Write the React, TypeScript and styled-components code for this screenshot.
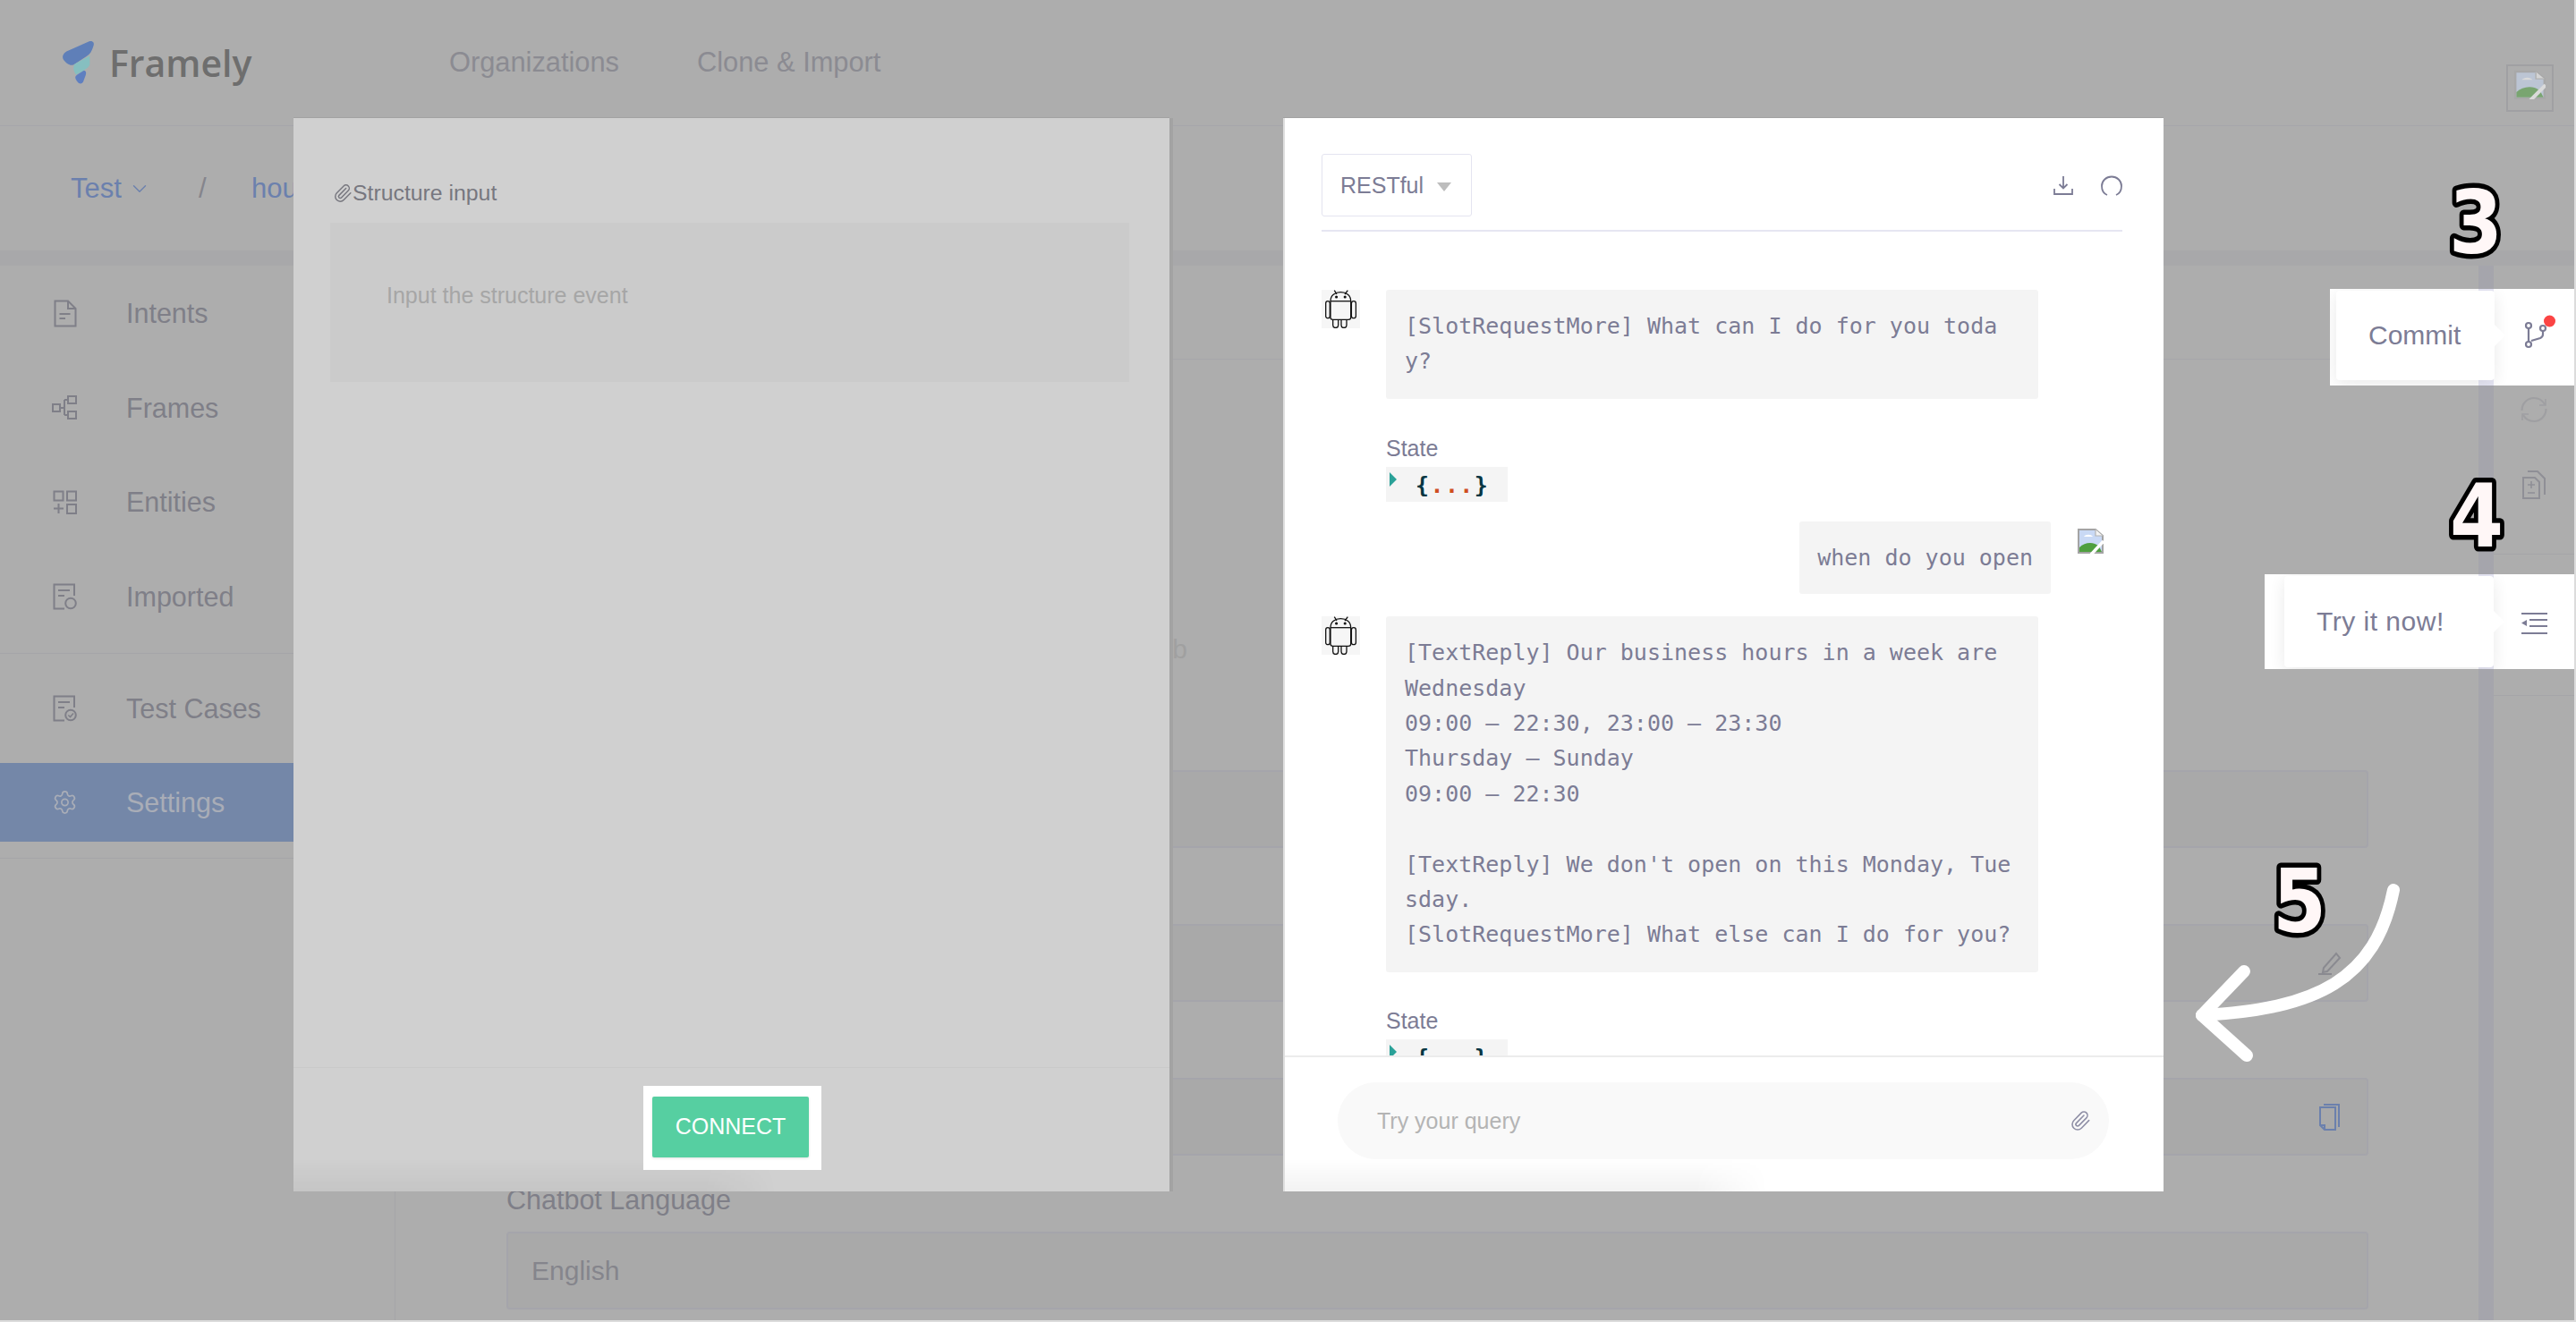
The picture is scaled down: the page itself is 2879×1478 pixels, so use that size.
import React from "react"
import styled, { createGlobalStyle } from "styled-components"
import { ChevronDown, Paperclip, Settings } from "lucide-react"

const GlobalStyle = createGlobalStyle`
  html, body {
    margin: 0;
    padding: 0;
    background: #dcdcdc;
  }
  * {
    box-sizing: border-box;
  }
`

const Stage = styled.div`
  position: relative;
  width: 2879px;
  height: 1478px;
  overflow: hidden;
  padding: 0 2px 2px 0;
  font-family: "Liberation Sans", Arial, sans-serif;
  color: #7f7f88;
`

const Page = styled.div`
  display: flex;
  flex-direction: column;
  height: 100%;
  background: #adadad;
`

const Header = styled.header`
  flex: none;
  display: flex;
  align-items: center;
  height: 141px;
  padding: 0 23px 0 67px;
  border-bottom: 1px solid #a6a6ab;
`

const Logo = styled.div`
  display: flex;
  align-items: center;
  gap: 15px;
  width: 435px;
  height: 60px;
  font-family: "Open Sans", sans-serif;
  font-size: 41px;
  font-weight: 600;
  color: #6e6e6e;
`

const TopNav = styled.nav`
  display: flex;
  gap: 87px;
  font-size: 30.8px;
  color: #8b8b92;
`

const UserPic = styled.div`
  align-self: flex-end;
  display: flex;
  justify-content: center;
  padding-top: 5px;
  width: 53px;
  height: 53px;
  margin: 0 0 15px auto;
  border: 2px solid #a0a0a3;
`

const Crumbs = styled.div`
  flex: none;
  display: flex;
  align-items: center;
  height: 139px;
  padding-left: 79px;
  font-size: 31px;
  color: #6b80ad;
`

const CrumbLink = styled.span`
  display: flex;
  align-items: center;
  gap: 7px;
  width: 143px;
`

const CrumbSlash = styled.span`
  width: 59px;
  color: #85858c;
`

const Band = styled.div`
  flex: none;
  height: 17px;
  background: #a8a8aa;
`

const Body = styled.div`
  flex: 1;
  display: flex;
  min-height: 0;
`

const Sidebar = styled.aside`
  flex: none;
  width: 442px;
  border-right: 1px solid #a5a5a8;
`

const NavGroup = styled.div<{ $top: number; $bottom: number }>`
  display: flex;
  flex-direction: column;
  gap: 17.6px;
  padding: ${(p) => p.$top}px 0 ${(p) => p.$bottom}px;
  border-bottom: 1px solid #a5a5a8;
`

const NavItem = styled.div<{ $active?: boolean }>`
  display: flex;
  align-items: center;
  gap: 54px;
  height: 88px;
  padding: 1px 0 0 58px;
  font-size: 30.5px;
  background: ${(p) => (p.$active ? "#7487a8" : "transparent")};
  color: ${(p) => (p.$active ? "#a9adb7" : "#7f7f88")};
`

const NavIcon = styled.span`
  flex: none;
  display: flex;
  justify-content: center;
  width: 29px;
  margin-top: -1px;
`

const Main = styled.main`
  flex: 1;
  min-width: 0;
`

const MainHead = styled.div`
  height: 105px;
  border-bottom: 1px solid #a6a6aa;
`

const Content = styled.div`
  padding: 304px 123px 0 124px;
`

const Hint = styled.p`
  width: 761px;
  margin: 0 0 29px;
  font-size: 30px;
  line-height: 40px;
  text-align: right;
  color: #a0a0a0;
`

const FieldLabel = styled.div`
  display: flex;
  align-items: center;
  height: 86px;
  font-size: 30.5px;
  color: #7f7f88;
`

const LanguageLabel = styled(FieldLabel)`
  align-items: flex-start;
  padding-top: 33px;
`

const FieldBox = styled.div`
  display: flex;
  align-items: center;
  justify-content: space-between;
  height: 87px;
  margin-bottom: -1px;
  padding: 0 28px 0 26px;
  background: #a9a9a9;
  border: 2px solid #a5a5ab;
  border-radius: 4px;
  font-size: 30px;
  color: #85858c;
`

const Gutter = styled.div`
  flex: none;
  width: 17px;
  background: #a5a5ac;
`

const Rail = styled.div`
  flex: none;
  width: 90px;
  padding-top: 35px;
`

const RailSlot = styled.div`
  display: flex;
  align-items: center;
  justify-content: center;
  height: 84px;
`

const RailRule = styled.div<{ $top: number }>`
  margin-top: ${(p) => p.$top}px;
  border-top: 1px solid #a5a5a8;
`

/* dialogs and highlights, they sit on top of the page */
const Dialog = styled.section<{ $left: number; $width: number; $bg: string }>`
  position: absolute;
  top: 132px;
  left: ${(p) => p.$left}px;
  width: ${(p) => p.$width}px;
  height: 1200px;
  display: flex;
  flex-direction: column;
  background: ${(p) => p.$bg};
  box-shadow: 0 -1px 0 #a2a2a2;

  &::after {
    content: "";
    position: absolute;
    left: 0;
    bottom: 0;
    width: 540px;
    height: 36px;
    background: linear-gradient(180deg, rgba(0, 0, 0, 0), rgba(0, 0, 0, 0.05));
    mask-image: linear-gradient(90deg, #000 85%, transparent);
    pointer-events: none;
  }
`

const LeftDialog = styled(Dialog)`
  box-shadow: 0 -1px 0 #a2a2a2, 4px 0 0 #a3a3a3;
`

const RightDialog = styled(Dialog)`
  border-left: 2px solid #dedede;
`

const StructureBody = styled.div`
  flex: 1;
  padding: 64px 45px 0 41px;
`

const StructureLabel = styled.div`
  display: flex;
  align-items: center;
  gap: 0;
  height: 40px;
  margin: 0 0 13px 3px;
  font-size: 24.8px;
  color: #77777f;
`

const StructureInput = styled.div`
  height: 178px;
  padding: 61px 63px;
  background: #cbcbcb;
  font-size: 25px;
  line-height: 40px;
  color: #a6a6a6;
`

const ConnectFooter = styled.div`
  flex: none;
  display: flex;
  align-items: center;
  justify-content: center;
  height: 139px;
  padding: 0 0 5px 2px;
  border-top: 1px solid #c9c9c9;
`

const Spotlight = styled.div`
  position: relative;
  z-index: 1;
  padding: 12px 14px 14px 10px;
  background: #fff;
`

const ConnectButton = styled.button`
  display: block;
  width: 175px;
  height: 68px;
  padding: 0;
  border: 0;
  border-radius: 2px;
  background: #56cfa1;
  box-shadow: 0 1px 3px rgba(0, 0, 0, 0.12);
  font-family: inherit;
  font-size: 25px;
  color: #fff;
`

const ChatHead = styled.div`
  flex: none;
  display: flex;
  align-items: center;
  justify-content: space-between;
  margin: 40px 46px 0 41px;
  padding-bottom: 15px;
  border-bottom: 2px solid #e6e6f2;
`

const ModeSelect = styled.div`
  display: flex;
  align-items: center;
  gap: 15px;
  width: 168px;
  height: 70px;
  padding-left: 20px;
  border: 1px solid #e4e4f0;
  border-radius: 3px;
  font-size: 25px;
  color: #7c7c95;
`

const Caret = styled.span`
  width: 0;
  height: 0;
  margin-top: 3px;
  border-left: 8px solid transparent;
  border-right: 8px solid transparent;
  border-top: 10px solid #bdbdbd;
`

const HeadTools = styled.div`
  display: flex;
  align-items: center;
  gap: 31px;
`

const ChatScroll = styled.div`
  flex: 1;
  min-height: 0;
  overflow: hidden;
  padding: 65px 46px 0 41px;
`

const BotRow = styled.div`
  display: flex;
  align-items: flex-start;
  gap: 29px;
`

const Avatar = styled.div`
  flex: none;
  width: 43px;
  height: 43px;
  background: #f6f6f6;
`

const Bubble = styled.div<{ $width?: number }>`
  width: ${(p) => (p.$width ? `${p.$width}px` : "auto")};
  padding: 21px 21px 22px;
  background: #f4f4f4;
  border-radius: 3px;
  font-family: "DejaVu Sans Mono", monospace;
  font-size: 25px;
  line-height: 39.4px;
  color: #7c7c95;
  white-space: pre-wrap;
  word-break: break-all;
`

const StateBlock = styled.div<{ $top: number }>`
  margin: ${(p) => p.$top}px 0 0 72px;
`

const StateTitle = styled.div`
  height: 40px;
  margin-top: -1px;
  font-size: 25px;
  line-height: 38px;
  color: #7c7c95;
`

const StateCode = styled.div`
  position: relative;
  width: 136px;
  height: 39px;
  padding-left: 33px;
  background: #f4f4f4;
  font-family: "DejaVu Sans Mono", monospace;
  font-size: 25px;
  font-weight: 700;
  letter-spacing: 1.4px;
  line-height: 42px;
  color: #073642;
`

const StateToggle = styled.span`
  position: absolute;
  left: 4px;
  top: 6px;
  width: 0;
  height: 0;
  border-top: 8px solid transparent;
  border-bottom: 8px solid transparent;
  border-left: 8px solid #2aa198;
`

const StateDots = styled.span`
  color: #cf4f1f;
`

const UserRow = styled.div`
  display: flex;
  justify-content: flex-end;
  align-items: flex-start;
  gap: 30px;
  margin: 22px 21px 25px 0;
`

const UserBubble = styled(Bubble)`
  padding: 21px 20px;
  white-space: nowrap;
`

const BrokenSlot = styled.div`
  padding-top: 8px;
`

const QueryFooter = styled.div`
  flex: none;
  height: 152px;
  padding: 28px 61px 0 59px;
  border-top: 2px solid #ececec;
`

const QueryBox = styled.div`
  display: flex;
  align-items: center;
  justify-content: space-between;
  height: 86px;
  padding: 0 20px 0 44px;
  border-radius: 43px;
  background: #f9f9f9;
  font-size: 25px;
  color: #b4b4b4;
`

const Callout = styled.div<{ $left: number; $top: number; $height: number; $pad: number; $band: number }>`
  position: absolute;
  left: ${(p) => p.$left}px;
  right: 2px;
  top: ${(p) => p.$top}px;
  height: ${(p) => p.$height}px;
  display: flex;
  align-items: flex-start;
  padding: 2px 0 0 ${(p) => p.$pad}px;
  background: linear-gradient(
    90deg,
    #fff ${(p) => p.$band}px,
    #e6e6f4 ${(p) => p.$band}px,
    #e6e6f4 ${(p) => p.$band + 17}px,
    #fff ${(p) => p.$band + 17}px
  );
  overflow: hidden;
`

const Tooltip = styled.div<{ $width: number; $height: number }>`
  position: relative;
  flex: none;
  display: flex;
  align-items: center;
  width: ${(p) => p.$width}px;
  height: ${(p) => p.$height}px;
  padding-left: 36px;
  background: #fff;
  border-radius: 4px;
  box-shadow: 0 4px 18px rgba(0, 0, 0, 0.09);
  font-size: 30px;
  color: #7c7c95;

  &::after {
    content: "";
    position: absolute;
    right: -12px;
    top: 50%;
    margin-top: -12px;
    border-top: 12px solid transparent;
    border-bottom: 12px solid transparent;
    border-left: 12px solid #fff;
  }
`

const TryLabel = styled.span`
  letter-spacing: 0.5px;
`

const CalloutIcon = styled.div<{ $gap: number; $top: number }>`
  margin: ${(p) => p.$top}px 0 0 ${(p) => p.$gap}px;
`

const Numeral = styled.svg<{ $left: number; $top: number }>`
  position: absolute;
  left: ${(p) => p.$left}px;
  top: ${(p) => p.$top}px;
  width: 100px;
  height: 110px;
  font-family: "DejaVu Sans", sans-serif;
  font-weight: 700;
`

const ArrowMark = styled.svg`
  position: absolute;
  left: 2440px;
  top: 980px;
  width: 250px;
  height: 215px;
`

const FramelyMark = () => (
  <svg width="40" height="52" viewBox="50 40 120 155">
    <path
      d="M148 46C160 43 167 50 162 63C157 80 150 90 140 96L100 122C88 132 72 122 62 108C56 98 60 88 72 80Z"
      fill="#5f7fb8"
    />
    <path d="M100 122L150 94L150 122C150 130 140 138 120 150L104 158C96 148 92 132 100 122Z" fill="#86bfc0" />
    <path d="M108 158L128 145C136 142 140 150 136 160L128 182C122 192 112 188 106 178C100 168 100 164 108 158Z" fill="#5f7fc0" />
  </svg>
)

const BrokenImage = ({ w, h, dim }: { w: number; h: number; dim?: boolean }) => (
  <svg width={w} height={h} viewBox="0 0 29 28" opacity={dim ? 0.55 : 1} preserveAspectRatio="none">
    <path d="M1 1H20L28 8V27H1Z" fill="#c9d9f5" stroke="#a4a4a4" strokeWidth="2" />
    <path d="M20 1V8H28" fill="#f4f4f4" stroke="#b4b4b4" strokeWidth="1.2" />
    <path d="M7 9C9 6 15 6 17 9Z" fill="#fff" />
    <path d="M2 26V21C8 15 18 14 24 20L27 26Z" fill="#4f9f3f" />
    <path d="M15 29L29 14" stroke="#fff" strokeWidth="3.5" />
  </svg>
)

const AndroidBot = () => (
  <svg width="43" height="43" viewBox="0 0 43 43" fill="none" stroke="#111" strokeWidth="1.3">
    <path d="M14.3 .7L17 5M29.3 .7L26 5" />
    <path d="M10 12.7C10 6 15 2.7 21.4 2.7C27.7 2.7 32.7 6 32.7 12.7V31C32.7 32.5 31.7 33.3 30 33.3H12.7C11 33.3 10 32.5 10 31Z" />
    <path d="M10 12.7H32.7" />
    <rect x="4.7" y="12.7" width="4.6" height="19" rx="2.3" />
    <rect x="33.4" y="12.7" width="5" height="19" rx="2.5" />
    <path d="M12.7 33.3V39.5C12.7 41.5 14 42.5 15.7 42.5C17.4 42.5 18.7 41.5 18.7 39.5V33.3" />
    <path d="M22 33.3V39.5C22 41.5 23.3 42.5 25 42.5C26.7 42.5 28 41.5 28 39.5V33.3" />
    <circle cx="16.6" cy="8" r=".9" fill="#111" />
    <circle cx="26.2" cy="8" r=".9" fill="#111" />
  </svg>
)

const navStroke = { fill: "none", stroke: "currentColor", strokeWidth: 2 }

const DocIcon = () => (
  <svg width="26" height="31" viewBox="0 0 26 31" {...navStroke}>
    <path d="M1.5 1.5H16L24.5 10V29.5H1.5Z" />
    <path d="M16 1.5V10H24.5M6.5 16H18.5M6.5 21H13" />
  </svg>
)

const FramesIcon = () => (
  <svg width="29" height="27" viewBox="0 0 29 27" {...navStroke}>
    <rect x="1" y="10" width="8" height="8" />
    <rect x="18" y="1" width="9" height="8" />
    <rect x="18" y="18" width="9" height="8" />
    <path d="M9 14H14M14 5H18M14 22H18M14 5V22" />
  </svg>
)

const EntitiesIcon = () => (
  <svg width="27" height="27" viewBox="0 0 27 27" {...navStroke}>
    <rect x="1.5" y="1.5" width="10" height="10" />
    <rect x="16" y="1.5" width="10" height="10" />
    <rect x="16" y="16" width="10" height="10" />
    <path d="M6.5 15V26M1 20.5H12" />
  </svg>
)

const ImportedIcon = ({ check }: { check?: boolean }) => (
  <svg width="27" height="30" viewBox="0 0 27 30" {...navStroke}>
    <path d="M13 28.5H1.5V1.5H24V14" />
    <path d="M6 8H19M6 14H13" />
    <circle cx="20" cy="22.5" r="5.8" />
    {check && <path d="M17.3 22.5L19.5 24.6L23 20.6" strokeWidth="1.5" />}
  </svg>
)

const GitIcon = () => (
  <svg width="36" height="40" viewBox="0 0 36 40" fill="none">
    <g stroke="#7c7c95" strokeWidth="2.2">
      <circle cx="6" cy="12" r="3" />
      <circle cx="6" cy="33" r="3" />
      <circle cx="22" cy="15" r="3" />
      <path d="M6 15V30M9 29L19 26C21 25 22 24 22 22V18" />
    </g>
    <circle cx="29.5" cy="7" r="6.5" fill="#fb4444" />
  </svg>
)

const ListIcon = () => (
  <svg width="29" height="24" viewBox="0 0 29 24" fill="#7c7c95">
    <rect y="0" width="29" height="2" />
    <rect x="9" y="7" width="20" height="2" />
    <rect x="9" y="14" width="20" height="2" />
    <rect y="22" width="29" height="2" />
    <path d="M0 11.5L6 8V15Z" />
  </svg>
)

const SyncIcon = () => (
  <svg width="30" height="30" viewBox="0 0 30 30" fill="none" stroke="#9f9fa2" strokeWidth="2.2">
    <path d="M1.5 16C1.5 8 7.5 2 15 2C20 2 24.5 4.5 27 9" />
    <path d="M28.5 14C28.5 22 22.5 28 15 28C10 28 5.5 25.5 3 21" />
    <path d="M28 3V10H21M2 27V20H9" strokeWidth="1.6" />
  </svg>
)

const DiffIcon = () => (
  <svg width="26" height="32" viewBox="0 0 26 32" fill="none" stroke="#8f8f96" strokeWidth="2">
    <path d="M1 8H14L19 13V31H1Z" />
    <path d="M6 1H17L25 9V27" />
    <path d="M6 16H14M10 12V20M6 25H14" strokeWidth="1.6" />
  </svg>
)

const DownloadIcon = () => (
  <svg width="22" height="21" viewBox="0 0 22 21" fill="none" stroke="#7c7c95" strokeWidth="1.8">
    <path d="M11 0V13M6.5 9L11 13.5L15.5 9M1 14V20H21V14" />
  </svg>
)

const ReloadIcon = () => (
  <svg width="24" height="23" viewBox="0 0 24 23" fill="none" stroke="#7c7c95" strokeWidth="1.8">
    <path d="M7 22C3.5 20.5 1 17 1 12C1 6 6 1.5 12 1.5C18 1.5 23 6 23 12C23 17 20.5 20.5 17 22" />
  </svg>
)

const PencilIcon = () => (
  <svg width="26" height="27" viewBox="0 0 26 27" fill="none" stroke="#8a8a90" strokeWidth="2">
    <path d="M6 19L5 24L10 23L24 8L20 3Z" />
    <path d="M0 26H15" />
  </svg>
)

const CopyIcon = () => (
  <svg width="25" height="31" viewBox="0 0 25 31" fill="none" stroke="#6b80ad" strokeWidth="2">
    <path d="M1 5H18V30H6L1 25Z" />
    <path d="M6 30V25H1M5 2H22V27" />
  </svg>
)

const Digit = ({ left, top, size, value }: { left: number; top: number; size: number; value: string }) => (
  <Numeral $left={left} $top={top} viewBox="0 0 100 110">
    <text
      transform="translate(50 95) scale(0.88 1)"
      fontSize={size}
      textAnchor="middle"
      fill="#fff7f7"
      stroke="#000"
      strokeWidth="11"
      strokeLinejoin="round"
      paintOrder="stroke fill"
    >
      {value}
    </text>
  </Numeral>
)

const sideItems = [
  { label: "Intents", icon: <DocIcon /> },
  { label: "Frames", icon: <FramesIcon /> },
  { label: "Entities", icon: <EntitiesIcon /> },
  { label: "Imported", icon: <ImportedIcon /> },
]

const replyText = `[TextReply] Our business hours in a week are
Wednesday
09:00 – 22:30, 23:00 – 23:30
Thursday – Sunday
09:00 – 22:30

[TextReply] We don't open on this Monday, Tuesday.
[SlotRequestMore] What else can I do for you?`

const StateDump = ({ top }: { top: number }) => (
  <StateBlock $top={top}>
    <StateTitle>State</StateTitle>
    <StateCode>
      <StateToggle />
      {"{"}
      <StateDots>...</StateDots>
      {"}"}
    </StateCode>
  </StateBlock>
)

const App = () => {
  return (
    <Stage>
      <GlobalStyle />
      <Page>
        <Header>
          <Logo>
            <FramelyMark />
            Framely
          </Logo>
          <TopNav>
            <span>Organizations</span>
            <span>Clone &amp; Import</span>
          </TopNav>
          <UserPic>
            <BrokenImage w={35} h={32} dim />
          </UserPic>
        </Header>
        <Crumbs>
          <CrumbLink>
            Test <ChevronDown size={26} strokeWidth={1.3} />
          </CrumbLink>
          <CrumbSlash>/</CrumbSlash>
          <span>hours</span>
        </Crumbs>
        <Band />
        <Body>
          <Sidebar>
            <NavGroup $top={9} $bottom={19}>
              {sideItems.map((item) => (
                <NavItem key={item.label}>
                  <NavIcon>{item.icon}</NavIcon>
                  {item.label}
                </NavItem>
              ))}
            </NavGroup>
            <NavGroup $top={17} $bottom={18}>
              <NavItem>
                <NavIcon>
                  <ImportedIcon check />
                </NavIcon>
                Test Cases
              </NavItem>
              <NavItem $active>
                <NavIcon>
                  <Settings size={32} strokeWidth={1.4} />
                </NavIcon>
                Settings
              </NavItem>
            </NavGroup>
          </Sidebar>
          <Main>
            <MainHead />
            <Content>
              <Hint>Connect the chatbot through the web</Hint>
              <FieldLabel>Chatbot Name</FieldLabel>
              <FieldBox />
              <FieldLabel>Chatbot Label</FieldLabel>
              <FieldBox>
                <span />
                <PencilIcon />
              </FieldBox>
              <FieldLabel>Chatbot ID</FieldLabel>
              <FieldBox>
                <span />
                <CopyIcon />
              </FieldBox>
              <LanguageLabel>Chatbot Language</LanguageLabel>
              <FieldBox>English</FieldBox>
            </Content>
          </Main>
          <Gutter />
          <Rail>
            <RailSlot />
            <RailSlot>
              <SyncIcon />
            </RailSlot>
            <RailSlot>
              <DiffIcon />
            </RailSlot>
            <RailRule $top={35} />
            <RailSlot />
            <RailRule $top={73} />
          </Rail>
        </Body>
      </Page>

      <LeftDialog $left={328} $width={979} $bg="#d0d0d0">
        <StructureBody>
          <StructureLabel>
            <Paperclip size={22} strokeWidth={1.6} />
            Structure input
          </StructureLabel>
          <StructureInput>Input the structure event</StructureInput>
        </StructureBody>
        <ConnectFooter>
          <Spotlight>
            <ConnectButton>CONNECT</ConnectButton>
          </Spotlight>
        </ConnectFooter>
      </LeftDialog>

      <RightDialog $left={1434} $width={984} $bg="#fff">
        <ChatHead>
          <ModeSelect>
            RESTful
            <Caret />
          </ModeSelect>
          <HeadTools>
            <DownloadIcon />
            <ReloadIcon />
          </HeadTools>
        </ChatHead>
        <ChatScroll>
          <BotRow>
            <Avatar>
              <AndroidBot />
            </Avatar>
            <Bubble $width={729}>[SlotRequestMore] What can I do for you today?</Bubble>
          </BotRow>
          <StateDump top={37} />
          <UserRow>
            <UserBubble>when do you open</UserBubble>
            <BrokenSlot>
              <BrokenImage w={29} h={28} />
            </BrokenSlot>
          </UserRow>
          <BotRow>
            <Avatar>
              <AndroidBot />
            </Avatar>
            <Bubble $width={729}>{replyText}</Bubble>
          </BotRow>
          <StateDump top={36} />
        </ChatScroll>
        <QueryFooter>
          <QueryBox>
            Try your query
            <Paperclip size={24} strokeWidth={1.6} color="#8f8fa6" />
          </QueryBox>
        </QueryFooter>
      </RightDialog>

      <Callout $left={2604} $top={323} $height={108} $pad={7} $band={166}>
        <Tooltip $width={177} $height={100}>
          Commit
        </Tooltip>
        <CalloutIcon $gap={32} $top={27}>
          <GitIcon />
        </CalloutIcon>
      </Callout>
      <Callout $left={2531} $top={642} $height={106} $pad={22} $band={239}>
        <Tooltip $width={234} $height={102}>
          <TryLabel>Try it now!</TryLabel>
        </Tooltip>
        <CalloutIcon $gap={31} $top={41}>
          <ListIcon />
        </CalloutIcon>
      </Callout>

      <Digit left={2717} top={188} size={98} value="3" />
      <Digit left={2718} top={516} size={98} value="4" />
      <Digit left={2520} top={947} size={98} value="5" />

      <ArrowMark viewBox="2440 980 250 215" fill="none" stroke="#fff" strokeWidth="14" strokeLinecap="round" strokeLinejoin="round">
        <path d="M2675 995C2655 1095 2590 1128 2461 1135" />
        <path d="M2508 1086L2461 1135L2511 1180" />
      </ArrowMark>
    </Stage>
  )
}

export default App
